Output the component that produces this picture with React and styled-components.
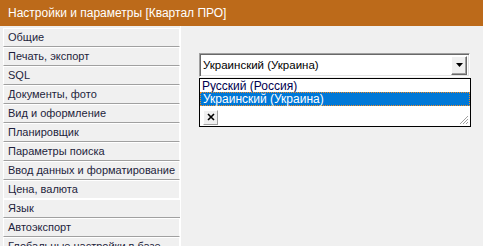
import React from "react";
import styled, { createGlobalStyle } from "styled-components";

const GlobalStyle = createGlobalStyle`
    html, body {
        margin: 0;
        padding: 0;
        background: #f0f0f0;
        overflow: hidden;
    }
    body {
        font-family: "Liberation Sans", Arial, sans-serif;
        font-size: 11px;
    }
`;

const Window = styled.div`
    width: 483px;
    height: 246px;
    display: flex;
    flex-direction: column;
    background: #f0f0f0;
`;

const TitleBar = styled.div`
    height: 26px;
    flex-shrink: 0;
    background: #bc6a1a;
    color: #ffffff;
    font-size: 12px;
    display: flex;
    align-items: center;
    padding: 0 0 1px 8px;
    box-sizing: border-box;
`;

const Body = styled.div`
    flex: 1;
    display: flex;
    min-height: 0;
`;

const Nav = styled.div`
    width: 177px;
    padding: 2px 0 0 3px;
    display: flex;
    flex-direction: column;
    overflow: hidden;
`;

const NavItem = styled.div`
    height: 19px;
    flex-shrink: 0;
    box-sizing: border-box;
    border-top: 1px solid #ffffff;
    border-left: 1px solid #ffffff;
    border-right: 1px solid ${props => (props.active ? "transparent" : "#ffffff")};
    border-bottom: 1px solid ${props => (props.active ? "#a0a0a0" : props.beforeActive ? "#ffffff" : "#a0a0a0")};
    margin-right: ${props => (props.active ? "-2px" : "0")};
    padding-left: 4px;
    color: #1e1e3c;
    line-height: 17px;
    white-space: nowrap;
`;

const Content = styled.div`
    flex: 1;
    border-left: 1px solid #ffffff;
    padding: 27px 0 0 18px;
`;

const ComboWrap = styled.div`
    position: relative;
    width: 271px;
`;

const Combo = styled.div`
    height: 24px;
    box-sizing: border-box;
    border: 1px solid;
    border-color: #a0a0a0 #ffffff #ffffff #a0a0a0;
    box-shadow: inset 1px 1px 0 #696969, inset -1px -1px 0 #e3e3e3;
    background: #ffffff;
    display: flex;
    align-items: center;
    padding: 0 2px 0 3px;
    color: #000000;
    font-size: 11.5px;
`;

const ComboText = styled.span`
    flex: 1;
`;

const ArrowButton = styled.div`
    width: 16px;
    height: 19px;
    box-sizing: border-box;
    background: #f0f0f0;
    border: 1px solid;
    border-color: #ffffff #696969 #696969 #ffffff;
    box-shadow: inset -1px -1px 0 #a0a0a0;
    display: flex;
    align-items: center;
    justify-content: center;
`;

const DropList = styled.div`
    position: absolute;
    top: 25px;
    left: 0;
    width: 272px;
    height: 49px;
    box-sizing: border-box;
    border: 1px solid #000000;
    background: #ffffff;
    display: flex;
    flex-direction: column;
    padding-top: 1px;
    font-size: 12px;
`;

const Option = styled.div`
    height: ${props => (props.selected ? "14px" : "12px")};
    box-sizing: border-box;
    line-height: 12px;
    padding-left: 2px;
    background: ${props => (props.selected ? "#0078d7" : "#ffffff")};
    color: ${props => (props.selected ? "#ffffff" : "#000050")};
    border: 1px dotted ${props => (props.selected ? "#f08a24" : "transparent")};
    border-width: ${props => (props.selected ? "1px" : "0")};
    white-space: nowrap;
`;

const Footer = styled.div`
    flex: 1;
    display: flex;
    align-items: center;
    justify-content: space-between;
    padding: 0 1px 0 3px;
`;

const CloseButton = styled.div`
    width: 15px;
    height: 15px;
    box-sizing: border-box;
    background: #f0f0f0;
    border: 1px solid;
    border-color: #ffffff #a0a0a0 #a0a0a0 #ffffff;
    display: flex;
    align-items: center;
    justify-content: center;
    margin-top: 2px;
`;

const Grip = styled.svg`
    align-self: flex-end;
    margin-bottom: 1px;
`;

const items = [
    "Общие",
    "Печать, экспорт",
    "SQL",
    "Документы, фото",
    "Вид и оформление",
    "Планировщик",
    "Параметры поиска",
    "Ввод данных и форматирование",
    "Цена, валюта",
    "Язык",
    "Автоэкспорт",
    "Глобальные настройки в базе",
];

const activeIndex = 9;

export default function App() {
    return (
        <Window>
            <GlobalStyle />
            <TitleBar>Настройки и параметры [Квартал ПРО]</TitleBar>
            <Body>
                <Nav>
                    {items.map((item, i) => (
                        <NavItem
                            key={item}
                            active={i === activeIndex}
                            beforeActive={i === activeIndex - 1}
                        >
                            {item}
                        </NavItem>
                    ))}
                </Nav>
                <Content>
                    <ComboWrap>
                        <Combo>
                            <ComboText>Украинский (Украина)</ComboText>
                            <ArrowButton>
                                <svg width="7" height="4" viewBox="0 0 7 4">
                                    <path d="M0 0h7L3.5 4z" fill="#000" />
                                </svg>
                            </ArrowButton>
                        </Combo>
                        <DropList>
                            <Option>Русский (Россия)</Option>
                            <Option selected>Украинский (Украина)</Option>
                            <Footer>
                                <CloseButton>
                                    <svg width="8" height="8" viewBox="0 0 8 8">
                                        <path d="M1 1l6 6M7 1l-6 6" stroke="#000" strokeWidth="1.6" />
                                    </svg>
                                </CloseButton>
                                <Grip width="11" height="11" viewBox="0 0 11 11">
                                    <path d="M10 2L2 10M10 5L5 10M10 8L8 10" stroke="#a0a0a0" strokeWidth="1" />
                                    <path d="M11 3L3 11M11 6L6 11M11 9L9 11" stroke="#ffffff" strokeWidth="1" />
                                </Grip>
                            </Footer>
                        </DropList>
                    </ComboWrap>
                </Content>
            </Body>
        </Window>
    );
}
